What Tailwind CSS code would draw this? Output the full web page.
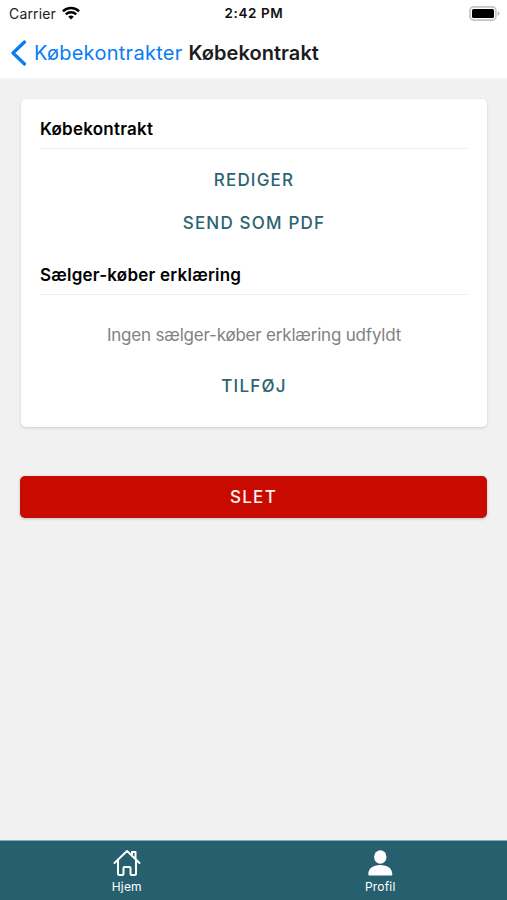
<!DOCTYPE html>
<html lang="da">
<head>
<meta charset="utf-8">
<meta name="viewport" content="width=device-width, initial-scale=1">
<title>Købekontrakt</title>
<script src="https://cdn.jsdelivr.net/npm/@tailwindcss/browser@4"></script>
</head>
<body class="flex h-[900px] w-[507px] flex-col overflow-hidden bg-[#f1f1f1] font-['Inter',sans-serif]">
<header class="h-[79px] shrink-0 border-b border-[#f5f5f5] bg-white">
  <div class="grid h-[27px] grid-cols-3 items-center pl-[9px] pr-[7px] text-[#1c1c1c]">
    <div class="flex items-center gap-[6px]">
      <span class="text-[14px] leading-[27px] tracking-[0.15px]">Carrier</span>
      <svg class="-mt-[2px] h-[14px] w-[18px]" viewBox="0 0 18 14" fill="none" stroke="#000" stroke-width="2.4"><path d="M.9 5.3a11.500 11.500 0 0 1 16.200 0M3.800 8.400a7.400 7.400 0 0 1 10.400 0"/><path d="M9 13.600 6.200 10.800a4 4 0 0 1 5.600 0z" fill="#000" stroke="none"/></svg>
    </div>
    <span class="pr-[1px] text-center text-[13.5px] font-semibold leading-[27px] tracking-[0.6px] text-[#111]">2:42 PM</span>
    <svg class="h-[15px] w-[31px] -mt-px justify-self-end" viewBox="0 0 31 15"><rect x=".9" y=".9" width="26" height="13.2" rx="3.6" fill="#fff" stroke="#c4c4c4" stroke-width="1.6"/><rect x="3" y="3" width="22" height="9" rx="1.500" fill="#000"/><path d="M28.700 5.300c2.400.8 2.400 3.600 0 4.400z" fill="#b5b5b5"/></svg>
  </div>
  <div class="flex h-[51px] items-center pl-[11px]">
    <svg class="h-[26px] w-[16px]" viewBox="0 0 16 26" fill="none" stroke="#087cf5" stroke-width="3.2" stroke-linecap="round" stroke-linejoin="round"><path d="M13.500 2 2 13l11.500 11"/></svg>
    <span class="ml-[7px] w-[154.500px] whitespace-nowrap pt-px text-[20px] leading-[51px] tracking-[0.27px] text-[#087cf5]">Købekontrakter</span>
    <h1 class="whitespace-nowrap pt-px text-[20px] font-semibold leading-[51px] tracking-[0.05px] text-[#1c1c1e]">Købekontrakt</h1>
  </div>
</header>
<main class="flex-1 px-[20px] pt-[20px]">
  <section class="ml-px h-[328px] rounded-[5px] bg-white px-[19px] pt-[16px] shadow-[0_1px_3px_rgba(0,0,0,0.15)]">
    <h2 class="h-[34px] border-b border-[#efefef] pt-px text-[17px] font-semibold leading-[27px] tracking-[0.23px] text-black">Købekontrakt</h2>
    <div class="flex flex-col items-center pt-[10px] text-[17px] font-medium leading-[43px] tracking-[1.2px] text-[#2b6370]">
      <button class="h-[43px]">REDIGER</button>
      <button class="h-[43px]">SEND SOM PDF</button>
    </div>
    <h2 class="mt-[16px] h-[34px] border-b border-[#efefef] pt-px text-[17px] font-semibold leading-[27px] tracking-[0.23px] text-black">Sælger-køber erklæring</h2>
    <p class="pt-[26px] text-center text-[17px] leading-[28px] tracking-[-0.2px] text-[#828282]">Ingen sælger-køber erklæring udfyldt</p>
    <div class="flex justify-center pt-[16px] text-[17px] font-medium leading-[43px] tracking-[1.2px] text-[#2b6370]"><button class="h-[43px]">TILFØJ</button></div>
  </section>
  <button class="mt-[49px] block h-[42px] w-full rounded-[5px] bg-[#c90a00] text-[17px] font-medium leading-[42px] tracking-[1.3px] text-[#fff1ef] shadow-[0_1px_3px_rgba(0,0,0,0.22)]">SLET</button>
</main>
<nav class="grid h-[60px] shrink-0 grid-cols-2 border-t border-[#8aa8b0] bg-[#265f6d] text-[12px] text-white">
  <a class="flex flex-col items-center pt-[8px]">
    <svg class="h-[28px] w-[28px]" viewBox="0 0 28 28" fill="none" stroke="#fff" stroke-width="2" stroke-linecap="round" stroke-linejoin="round"><path d="M1.500 14 14 2l12.500 12M5 11v13.500q0 1.500 1.500 1.500H9.500Q10.500 26 10.500 25V19q0-1 1-1h5q1 0 1 1v6q0 1 1 1h3q1.500 0 1.500-1.500V11M19 6V3h3.500v6.500"/></svg>
    <span class="leading-[19px] tracking-[0.200px]">Hjem</span>
  </a>
  <a class="flex flex-col items-center pt-[8px]">
    <svg class="h-[28px] w-[28px]" viewBox="0 0 28 28" fill="#fff"><ellipse cx="14.300" cy="8" rx="6.200" ry="6.700"/><path d="M2.300 25.500C2.300 19.500 6.800 16 14.300 16s12 3.500 12 9.500q0 1-1 1h-22q-1 0-1-1z"/></svg>
    <span class="leading-[19px] tracking-[0.200px]">Profil</span>
  </a>
</nav>
</body>
</html>
